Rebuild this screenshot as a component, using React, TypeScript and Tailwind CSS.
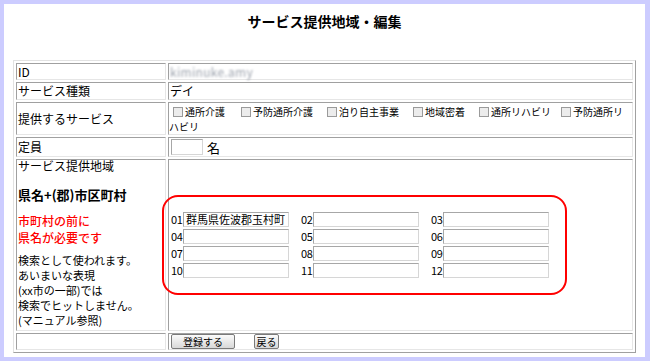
import React from "react";

const font = { fontFamily: '"Noto Sans CJK JP", "Noto Sans", sans-serif' };

function Box({ value = "", w }: { value?: string; w: string }) {
  return (
    <div
      className={`${w} h-[15px] border border-t-[#a7a7a7] border-l-[#a7a7a7] border-r-[#d6d6d6] border-b-[#d6d6d6] bg-white text-[11px] leading-[13px] pl-[2px] text-black whitespace-nowrap overflow-hidden`}
    >
      {value}
    </div>
  );
}

function Check({ label, w }: { label: string; w: string }) {
  return (
    <div className={`flex items-center ${w} shrink-0`}>
      <span className="w-[10px] h-[10px] border border-[#9a9a9a] bg-[#ececec] mr-[2px] shrink-0" />
      <span className="text-[10px] whitespace-nowrap">{label}</span>
    </div>
  );
}

export default function App() {
  const areas = [
    ["01", "群馬県佐波郡玉村町"],
    ["02", ""],
    ["03", ""],
    ["04", ""],
    ["05", ""],
    ["06", ""],
    ["07", ""],
    ["08", ""],
    ["09", ""],
    ["10", ""],
    ["11", ""],
    ["12", ""],
  ];
  return (
    <div className="w-[650px] h-[361px] bg-[#ccccff] pt-[4px] pl-[4px] pr-[5px] pb-[4px] text-black" style={font}>
      <div className="relative bg-white w-full h-full">
        <div className="h-[56px] pt-[7px] text-center text-[14px] leading-[20px] font-bold">
          サービス提供地域・編集
        </div>
        <div className="ml-[9px] w-[623px] h-[293px] border border-t-[#e2e2e2] border-l-[#e2e2e2] border-r-[#a0a0a0] border-b-[#a0a0a0] p-[2px] grid grid-cols-[150px_465px] grid-rows-[17px_18px_33px_20px_172px_17px] gap-[2px]">
          {/* ID */}
          <div className="border border-t-[#a0a0a0] border-l-[#a0a0a0] border-r-[#e6e6e6] border-b-[#e6e6e6] flex items-center pl-[1px] text-[12px]">
            ID
          </div>
          <div className="border border-t-[#a0a0a0] border-l-[#a0a0a0] border-r-[#e6e6e6] border-b-[#e6e6e6] flex items-center pl-[1px]">
            <span className="text-[12px] text-[#9ea4ae] blur-[1px] tracking-[0.3px]">kiminuke.amy</span>
          </div>
          {/* type */}
          <div className="border border-t-[#a0a0a0] border-l-[#a0a0a0] border-r-[#e6e6e6] border-b-[#e6e6e6] flex items-center pl-[1px] text-[12px]">
            サービス種類
          </div>
          <div className="border border-t-[#a0a0a0] border-l-[#a0a0a0] border-r-[#e6e6e6] border-b-[#e6e6e6] flex items-center pl-[1px] text-[12px]">
            デイ
          </div>
          {/* services */}
          <div className="border border-t-[#a0a0a0] border-l-[#a0a0a0] border-r-[#e6e6e6] border-b-[#e6e6e6] flex items-center pl-[1px] text-[12px]">
            提供するサービス
          </div>
          <div className="border border-t-[#a0a0a0] border-l-[#a0a0a0] border-r-[#e6e6e6] border-b-[#e6e6e6] pt-[1px] leading-[15px] overflow-hidden">
            <div className="flex items-center h-[15px] pl-[4px]">
              <Check label="通所介護" w="w-[68px]" />
              <Check label="予防通所介護" w="w-[86px]" />
              <Check label="泊り自主事業" w="w-[86px]" />
              <Check label="地域密着" w="w-[66px]" />
              <Check label="通所リハビリ" w="w-[82px]" />
              <Check label="予防通所リ" w="w-[60px]" />
            </div>
            <div className="h-[15px] text-[10px] leading-[15px]">ハビリ</div>
          </div>
          {/* capacity */}
          <div className="border border-t-[#a0a0a0] border-l-[#a0a0a0] border-r-[#e6e6e6] border-b-[#e6e6e6] flex items-center pl-[1px] text-[12px]">
            定員
          </div>
          <div className="border border-t-[#a0a0a0] border-l-[#a0a0a0] border-r-[#e6e6e6] border-b-[#e6e6e6] flex items-center pl-[1px]">
            <div className="ml-[1px] w-[32px] h-[16px] border border-t-[#a7a7a7] border-l-[#a7a7a7] border-r-[#d6d6d6] border-b-[#d6d6d6]" />
            <span className="ml-[4px] text-[13px] leading-none">名</span>
          </div>
          {/* area */}
          <div className="border border-t-[#a0a0a0] border-l-[#a0a0a0] border-r-[#e6e6e6] border-b-[#e6e6e6] pl-[1px]">
            <div className="mt-0 text-[12px] leading-[12px]">サービス提供地域</div>
            <div className="mt-[15px] text-[13px] leading-[15px] font-bold">県名+(郡)市区町村</div>
            <div className="mt-[11px] text-[12px] leading-[16.5px] text-[#ff0000] font-medium">
              <div>市町村の前に</div>
              <div>県名が必要です</div>
            </div>
            <div className="mt-[7px] text-[11px] leading-[15px]">
              検索として使われます。
              <br />
              あいまいな表現
              <br />
              (xx市の一部)では
              <br />
              検索でヒットしません。
              <br />
              (マニュアル参照)
            </div>
          </div>
          <div className="border border-t-[#a0a0a0] border-l-[#a0a0a0] border-r-[#e6e6e6] border-b-[#e6e6e6] flex items-center pl-[2px]">
            <div className="grid grid-cols-[130px_130px_118px] grid-rows-[15px_15px_15px_15px] gap-y-[2px]">
              {areas.map(([n, v]) => (
                <div key={n} className="flex items-center">
                  <span className="w-[12px] text-[11px] leading-none tracking-[-0.3px]">{n}</span>
                  <Box value={v} w="w-[106px]" />
                </div>
              ))}
            </div>
          </div>
          {/* buttons */}
          <div className="border border-t-[#a0a0a0] border-l-[#a0a0a0] border-r-[#e6e6e6] border-b-[#e6e6e6]" />
          <div className="border border-t-[#a0a0a0] border-l-[#a0a0a0] border-r-[#e6e6e6] border-b-[#e6e6e6] flex items-center pl-[1px]">
            <button className="ml-[1px] w-[64px] h-[15px] border border-[#7a7a7a] rounded-[2px] bg-gradient-to-b from-[#fbfbfb] to-[#d8d8d8] text-[10px] leading-[13px] flex items-center justify-center">
              登録する
            </button>
            <button className="ml-[19px] w-[25px] h-[15px] border border-[#7a7a7a] rounded-[2px] bg-gradient-to-b from-[#fbfbfb] to-[#d8d8d8] text-[10px] leading-[13px] flex items-center justify-center">
              戻る
            </button>
          </div>
        </div>
        {/* red annotation */}
        <div className="absolute left-[158px] top-[191px] w-[405px] h-[100px] border-2 border-[#ff0000] rounded-[16px] pointer-events-none" />
      </div>
    </div>
  );
}
